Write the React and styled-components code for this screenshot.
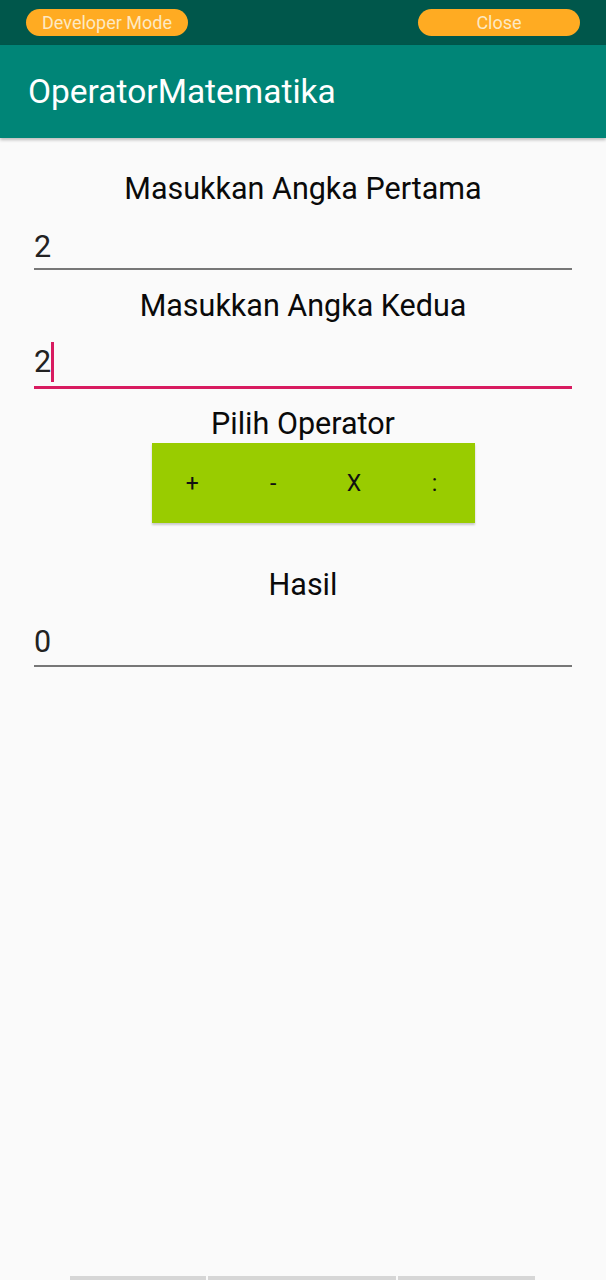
import React from 'react'
import styled, { createGlobalStyle } from 'styled-components'

const Global = createGlobalStyle`
  html, body {
    margin: 0;
    padding: 0;
    background: #fafafa;
    font-family: Roboto, "Noto Sans", sans-serif;
  }
`

const Screen = styled.div`
  width: 606px;
  height: 1280px;
  display: flex;
  flex-direction: column;
  background: #fafafa;
  overflow: hidden;
`

const StatusBar = styled.div`
  height: 45px;
  background: #00574b;
  display: flex;
  align-items: center;
  justify-content: space-between;
  padding: 0 26px;
  box-sizing: border-box;
`

const Pill = styled.div`
  width: 162px;
  height: 27px;
  margin-top: -1px;
  border-radius: 14px;
  background: #ffab22;
  color: #fde9c4;
  font-size: 18px;
  display: flex;
  align-items: center;
  justify-content: center;
`

const AppBar = styled.div`
  height: 93px;
  background: #008577;
  display: flex;
  align-items: center;
  padding: 0 28px;
  box-shadow: 0 2px 3px rgba(0, 0, 0, 0.25);
  position: relative;
  z-index: 1;
`

const Title = styled.h1`
  margin: 0;
  font-size: 33.5px;
  font-weight: 400;
  color: #fff;
`

const Content = styled.div`
  flex: 1;
  display: flex;
  flex-direction: column;
  align-items: center;
  padding: 31px 34px 0;
`

const Label = styled.div`
  font-size: 30.5px;
  color: #0a0a0a;
  line-height: 40px;
  margin-top: ${p => p.$top || 0}px;
`

const Field = styled.div`
  align-self: stretch;
  box-sizing: border-box;
  height: ${p => p.$h || 61}px;
  padding-bottom: ${p => p.$pb || 4}px;
  border-bottom: ${p => (p.$focused ? '3px solid #d81b60' : '2px solid #777')};
  display: flex;
  align-items: flex-end;
  font-size: 30.5px;
  line-height: 36px;
  color: #222;
`

const Caret = styled.span`
  display: inline-block;
  width: 3px;
  height: 40px;
  background: #d81b60;
  margin-left: 0;
  align-self: flex-end;
  margin-bottom: -2px;
`

const ButtonGroup = styled.div`
  display: flex;
  width: 323px;
  height: 80px;
  margin-left: 21px;
  margin-top: -1px;
  background: #99cc00;
  box-shadow: 0 2px 2px rgba(0, 0, 0, 0.2);
`

const OpButton = styled.div`
  flex: 1;
  display: flex;
  align-items: center;
  justify-content: center;
  font-size: 23px;
  color: #111;
`

const NavHint = styled.div`
  display: flex;
  gap: 2px;
  padding-left: 70px;
  height: 4px;
`

const NavBar = styled.div`
  width: ${p => p.$w}px;
  background: #d6d6d6;
`

export default function App() {
  return (
    <Screen>
      <Global />
      <StatusBar>
        <Pill>Developer Mode</Pill>
        <Pill>Close</Pill>
      </StatusBar>
      <AppBar>
        <Title>OperatorMatematika</Title>
      </AppBar>
      <Content>
        <Label>Masukkan Angka Pertama</Label>
        <Field $h={61} $pb={3}>2</Field>
        <Label $top={16}>Masukkan Angka Kedua</Label>
        <Field $h={63} $pb={6} $focused>
          2<Caret />
        </Field>
        <Label $top={15}>Pilih Operator</Label>
        <ButtonGroup>
          <OpButton>+</OpButton>
          <OpButton>-</OpButton>
          <OpButton>X</OpButton>
          <OpButton>:</OpButton>
        </ButtonGroup>
        <Label $top={42}>Hasil</Label>
        <Field $h={62} $pb={5}>0</Field>
      </Content>
      <NavHint>
        <NavBar $w={136} />
        <NavBar $w={188} />
        <NavBar $w={137} />
      </NavHint>
    </Screen>
  )
}
